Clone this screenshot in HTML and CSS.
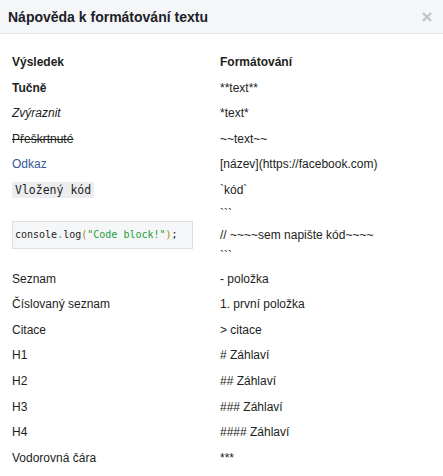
FILE: index.html
```html
<!DOCTYPE html>
<html lang="cs">
<head>
<meta charset="utf-8">
<title>Nápověda k formátování textu</title>
<link rel="stylesheet" href="styles.css">
</head>
<body>
<div class="dialog">
  <div class="header">
    <h1 class="title">Nápověda k formátování textu</h1>
    <span class="close" aria-label="Zavřít">
      <svg width="10" height="10" viewBox="0 0 10 10"><path d="M1 1L9 9M9 1L1 9" stroke="#bec3c9" stroke-width="2.2" fill="none"/></svg>
    </span>
  </div>
  <div class="table">
    <div class="cell head">Výsledek</div><div class="cell head">Formátování</div>
    <div class="cell bold">Tučně</div><div class="cell">**text**</div>
    <div class="cell italic">Zvýraznit</div><div class="cell">*text*</div>
    <div class="cell strike">Přeškrtnuté</div><div class="cell">~~text~~</div>
    <div class="cell"><a class="link" href="#">Odkaz</a></div><div class="cell">[název](https://facebook.com)</div>
    <div class="cell"><code class="inline-code">Vložený kód</code></div><div class="cell">`kód`</div>
    <div class="cell code-cell"><pre class="code-block"><span>console</span><span class="c-dot">.</span><span>log</span><span class="c-paren">(</span><span class="c-str">"Code block!"</span><span class="c-paren">)</span><span>;</span></pre></div>
    <div class="cell code-src"><div class="src-line">```</div><div class="src-line">// ~~~~sem napište kód~~~~</div><div class="src-line">```</div></div>
    <div class="cell">Seznam</div><div class="cell">- položka</div>
    <div class="cell">Číslovaný seznam</div><div class="cell">1. první položka</div>
    <div class="cell">Citace</div><div class="cell">&gt; citace</div>
    <div class="cell">H1</div><div class="cell"># Záhlaví</div>
    <div class="cell">H2</div><div class="cell">## Záhlaví</div>
    <div class="cell">H3</div><div class="cell">### Záhlaví</div>
    <div class="cell">H4</div><div class="cell">#### Záhlaví</div>
    <div class="cell">Vodorovná čára</div><div class="cell">***</div>
  </div>
</div>
</body>
</html>
```
FILE: styles.css
```css
html, body {
  margin: 0;
  padding: 0;
  background: #ffffff;
}
body {
  font-family: "Liberation Sans", Arial, Helvetica, sans-serif;
  font-size: 12px;
  color: #1c1e21;
}
.dialog {
  width: 443px;
}
.header {
  height: 34px;
  background: #f5f6f7;
  border-bottom: 1px solid #e5e5e5;
  display: flex;
  align-items: center;
  justify-content: space-between;
  padding: 0 11px 0 8px;
  box-sizing: border-box;
}
.title {
  margin: 0;
  font-size: 14px;
  font-weight: bold;
  color: #1d2129;
}
.close {
  display: flex;
  width: 10px;
  height: 10px;
}
.table {
  display: grid;
  grid-template-columns: 208px 1fr;
  padding: 16px 12px 0 12px;
}
.cell {
  padding: 5px 0;
  line-height: 15.6px;
}
.head {
  font-weight: bold;
}
.bold {
  font-weight: bold;
}
.italic {
  font-style: italic;
}
.strike {
  text-decoration: line-through;
}
.link {
  color: #385898;
  text-decoration: none;
}
.inline-code {
  font-family: "DejaVu Sans Mono", Menlo, monospace;
  font-size: 11.5px;
  background: #ebedf0;
  padding: 1px 3px;
  color: #1c1e21;
}
.code-cell {
  display: flex;
  align-items: center;
  padding-right: 27px;
}
.code-block {
  margin: 0;
  flex: 1;
  font-family: "DejaVu Sans Mono", Menlo, monospace;
  font-size: 10px;
  line-height: 14px;
  padding: 6px 2px;
  background: #f5f6f7;
  border: 1px solid #dddfe2;
  color: #1c1e21;
}
.c-dot { color: #4d8a9e; }
.c-paren { color: #a8860f; }
.c-str { color: #23a03a; }
.code-src {
  padding: 0;
}
.src-line {
  line-height: 21px;
}
```
